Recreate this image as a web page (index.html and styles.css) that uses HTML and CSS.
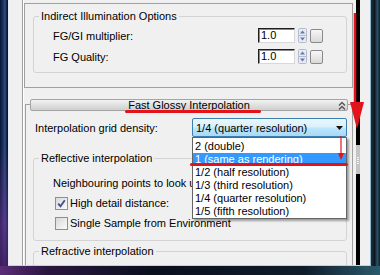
FILE: index.html
```html
<!DOCTYPE html>
<html lang="en">
<head>
    <meta charset="UTF-8">
    <meta name="viewport" content="width=device-width, initial-scale=1.0">
    <title>Fast Glossy Interpolation</title>
    <link rel="stylesheet" href="styles.css">
</head>
<body>
<div class="screen">
    <div class="frame-row">
        <div class="frame-left"></div>
        <div class="client">
            <div class="rollouts">
                <div class="rollout rollout-top">
                    <fieldset class="group group-indirect">
                        <legend>Indirect Illumination Options</legend>
                        <div class="row">
                            <span class="label">FG/GI multiplier:</span>
                            <span class="spin-field">1.0</span>
                            <svg class="spin-arrows" width="9" height="15" viewBox="0 0 9 15">
                                <rect x="0.5" y="0.5" width="8" height="14" rx="1" fill="#e6eaf2" stroke="#b3bccc"/>
                                <line x1="1" y1="7.5" x2="8" y2="7.5" stroke="#b3bccc"/>
                                <polygon points="2,5.5 4.5,2.5 7,5.5" fill="#6877a3"/>
                                <polygon points="2,9.5 4.5,12.5 7,9.5" fill="#6877a3"/>
                            </svg>
                            <span class="lock-btn"></span>
                        </div>
                        <div class="row">
                            <span class="label">FG Quality:</span>
                            <span class="spin-field">1.0</span>
                            <svg class="spin-arrows" width="9" height="15" viewBox="0 0 9 15">
                                <rect x="0.5" y="0.5" width="8" height="14" rx="1" fill="#e6eaf2" stroke="#b3bccc"/>
                                <line x1="1" y1="7.5" x2="8" y2="7.5" stroke="#b3bccc"/>
                                <polygon points="2,5.5 4.5,2.5 7,5.5" fill="#6877a3"/>
                                <polygon points="2,9.5 4.5,12.5 7,9.5" fill="#6877a3"/>
                            </svg>
                            <span class="lock-btn"></span>
                        </div>
                    </fieldset>
                </div>

                <div class="rollout rollout-fgi">
                    <div class="rollout-title">
                        <span></span>
                        <span>Fast Glossy Interpolation</span>
                        <svg class="collapse" width="8" height="9" viewBox="0 0 8 9">
                            <polyline points="1,4.5 4,1.5 7,4.5" fill="none" stroke="#555" stroke-width="1.3"/>
                            <polyline points="1,8.5 4,5.5 7,8.5" fill="none" stroke="#555" stroke-width="1.3"/>
                        </svg>
                    </div>
                    <div class="combo-row">
                        <span class="label">Interpolation grid density:</span>
                        <div class="combo">
                            <span>1/4 (quarter resolution)</span>
                            <svg width="7" height="4" viewBox="0 0 7 4"><polygon points="0,0 7,0 3.5,4" fill="#111"/></svg>
                            <ul class="combo-list">
                                <li>2 (double)</li>
                                <li class="selected">1 (same as rendering)</li>
                                <li>1/2 (half resolution)</li>
                                <li>1/3 (third resolution)</li>
                                <li>1/4 (quarter resolution)</li>
                                <li>1/5 (fifth resolution)</li>
                            </ul>
                        </div>
                    </div>
                    <fieldset class="group group-reflect">
                        <legend>Reflective interpolation</legend>
                        <div class="check-row">Neighbouring points to look up:</div>
                        <div class="check-row">
                            <span class="check">
                                <svg width="11" height="11" viewBox="0 0 11 11"><polyline points="2.2,5.6 4.5,8.2 8.8,2.2" fill="none" stroke="#3f4f92" stroke-width="1.8"/></svg>
                            </span>
                            High detail distance:
                        </div>
                        <div class="check-row">
                            <span class="check"></span>
                            Single Sample from Environment
                        </div>
                    </fieldset>
                    <fieldset class="group group-refract">
                        <legend>Refractive interpolation</legend>
                    </fieldset>
                </div>
            </div>
            <div class="scrollbar"><div class="thumb"></div></div>
        </div>
        <div class="frame-right"></div>
    </div>
    <div class="frame-bottom"></div>

    <!-- red annotations drawn over the dialog -->
    <div class="mark mark-title"></div>
    <div class="mark mark-item"></div>
    <svg class="arrow-big" width="20" height="122" viewBox="0 0 20 122">
        <line x1="7" y1="3" x2="7" y2="96" stroke="#e3131b" stroke-width="2.5"/>
        <polygon points="2,92 16,92 9,119" fill="#e3131b"/>
    </svg>
    <svg class="arrow-small" width="8" height="26" viewBox="0 0 8 26">
        <line x1="4" y1="0" x2="4" y2="19" stroke="#e3131b" stroke-width="1.2"/>
        <polygon points="1,17 7,17 4,24" fill="#e3131b"/>
    </svg>
</div>
</body>
</html>
```

FILE: styles.css
```css
body {
    margin: 0;
    font-family: "Liberation Sans", Arial, sans-serif;
    font-size: 11px;
    color: #000;
    background: #0a1020;
}
.screen {
    position: relative;
    width: 380px;
    height: 275px;
    overflow: hidden;
}
.frame-row {
    display: flex;
    height: 266px;
}
.frame-left {
    width: 8px;
    background:
        linear-gradient(to bottom, rgba(0,0,0,0) 55%, rgba(110,50,150,.55) 85%, rgba(70,30,100,.85)),
        linear-gradient(to right, #0b1530 0, #1d3466 40%, #2c4d86 60%, #060a18 100%);
}
.client {
    width: 363px;
    box-sizing: border-box;
    display: flex;
    background: #f0f0f0;
    border-left: 1px solid #e4ebf2;
    border-right: 1px solid #8fb4c8;
    border-bottom: 1px solid #c6d0da;
}
.frame-right {
    width: 9px;
    background: linear-gradient(to right, #1b2f3d, #0c1820 40%, #2d5266 70%, #0e1f2a);
}
.frame-bottom {
    height: 9px;
    background: linear-gradient(to right, #5b2d78 0, #2a1640 12%, #0a0f1e 40%, #0f1c2a 80%, #2b5a6c 100%);
}

/* rollout area */
.rollouts {
    width: 334px;
    margin-left: 13px;
    box-sizing: border-box;
    border-left: 1px solid #a0a0a0;
    padding-left: 1px;
    box-shadow: inset 1px 0 #fff;
    overflow: hidden;
}
.rollout {
    width: 329px;
    box-sizing: border-box;
    border: 1px solid #a0a0a0;
}
.rollout-top {
    margin-top: 3px;
    padding-bottom: 14px;
}
.rollout-fgi {
    width: 328px;
    margin: 16px 0 0 1px;
    padding-bottom: 30px;
    border-bottom: none;
}
.rollout-title {
    display: grid;
    grid-template-columns: 1fr auto 1fr;
    align-items: center;
    height: 12px;
    box-sizing: border-box;
    margin: -6px 4px 0;
    border: 1px solid #a4a4a4;
    border-radius: 2px;
    background: linear-gradient(#f2f2f2, #cfcfcf);
    line-height: 10px;
}
.collapse {
    justify-self: end;
    margin-right: 1px;
}

/* group boxes */
.group {
    margin: 0;
    padding: 0;
    width: 314px;
    min-width: 0;
    box-sizing: border-box;
    border: 1px solid #d3d3d3;
    border-radius: 3px;
}
.group legend {
    margin-left: 5px;
    padding: 0 2px;
    line-height: 13px;
}
.group-indirect {
    margin: 6px 0 0 8px;
    padding: 2px 23px 5px 19px;
}
.group-reflect {
    margin: 15px 0 0 7px;
    padding: 8px 10px 7px 19px;
}
.group-indirect legend,
.group-reflect legend {
    margin-left: -14px;
}
.group-refract {
    margin: 4px 0 0 7px;
    height: 40px;
}

.row {
    display: flex;
    align-items: center;
    height: 21px;
}
.label {
    flex: 1;
}
.spin-field {
    width: 37px;
    height: 15px;
    box-sizing: border-box;
    padding-left: 2px;
    line-height: 13px;
    background: #fff;
    border: 1px solid;
    border-color: #1e1e1e #d8d8d8 #d8d8d8 #1e1e1e;
    box-shadow: inset 1px 1px #8a8a8a;
}
.spin-arrows {
    margin-left: 3px;
}
.lock-btn {
    width: 13px;
    height: 14px;
    margin-left: 3px;
    box-sizing: border-box;
    border: 1px solid #8a8a8a;
    border-radius: 2px;
    background: linear-gradient(#f7f7f7, #d9d9d9);
}

/* combobox */
.combo-row {
    display: flex;
    justify-content: space-between;
    align-items: center;
    margin-top: 7px;
    padding: 0 5px 0 9px;
}
.combo {
    position: relative;
    display: flex;
    align-items: center;
    justify-content: space-between;
    width: 155px;
    height: 19px;
    box-sizing: border-box;
    padding: 0 3px 0 3px;
    border: 1px solid #3c7fb1;
    border-radius: 2px;
    background: linear-gradient(#eaf6fd 0%, #d9f0fc 48%, #bee6fd 52%, #a7d9f5 100%);
}
.combo-list {
    position: absolute;
    top: 18px;
    left: -1px;
    z-index: 2;
    width: 155px;
    box-sizing: border-box;
    margin: 0;
    padding: 2px 0 0;
    list-style: none;
    background: #fff;
    border: 1px solid #646464;
    box-shadow: 2px 2px 2px rgba(0,0,0,.35);
}
.combo-list li {
    height: 13px;
    line-height: 13px;
    padding-left: 2px;
}
.combo-list li.selected {
    background: #3399ff;
    color: #fff;
}

/* checkboxes */
.check-row {
    display: flex;
    align-items: center;
    height: 20px;
}
.check {
    display: flex;
    align-items: center;
    justify-content: center;
    width: 13px;
    height: 13px;
    box-sizing: border-box;
    margin: 0 2px 0 2px;
    border: 1px solid #8e8f8f;
    background: linear-gradient(135deg, #d8d8d8, #fbfbfb);
}

/* scrollbar strip */
.scrollbar {
    width: 4px;
    background: #000;
}
.thumb {
    margin-top: 145px;
    height: 29px;
    background:
        repeating-linear-gradient(#c4c4c4 0 1px, #f4f4f4 1px 2px) center / 2px 8px no-repeat,
        #c4c4c4;
}

/* annotations */
.mark {
    position: absolute;
    height: 3px;
    border-radius: 2px;
    background: #e3131b;
    z-index: 5;
}
.mark-title {
    left: 125px;
    top: 110px;
    width: 136px;
}
.mark-item {
    left: 190px;
    top: 163px;
    width: 158px;
}
.arrow-big {
    position: absolute;
    left: 348px;
    top: 10px;
    z-index: 5;
}
.arrow-small {
    position: absolute;
    left: 337px;
    top: 136px;
    z-index: 5;
}
```
